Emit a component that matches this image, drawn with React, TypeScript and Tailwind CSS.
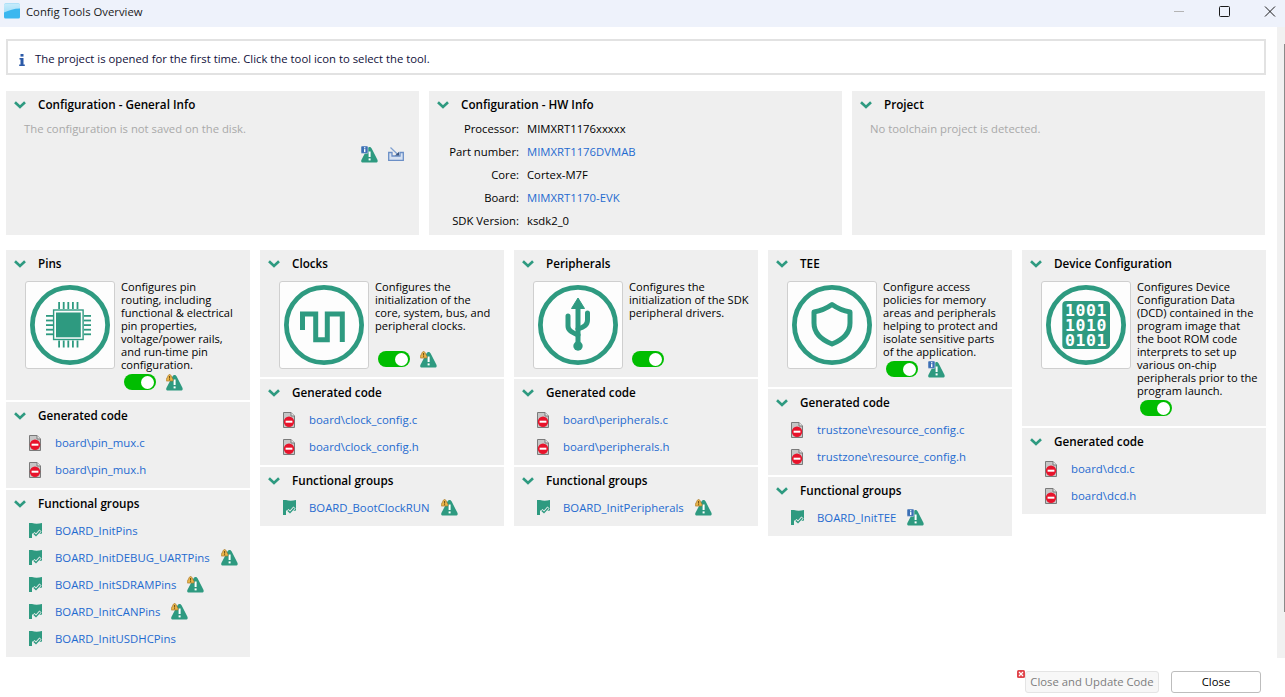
import React from "react";

const TEAL = "#2e9a80";

function Chevron() {
  return (
    <svg width="12" height="8" viewBox="0 0 12 8" className="shrink-0">
      <path d="M1 1.2 L6 6 L11 1.2" fill="none" stroke={TEAL} strokeWidth="2.6" />
    </svg>
  );
}

function Warn({ kind }: { kind?: "info" | "warn" }) {
  return (
    <svg width="17" height="17" viewBox="0 0 17 17" className="shrink-0">
      <path d="M8.6 1 C9.6 1 10.2 1.6 10.7 2.6 L16.3 13.6 C17.2 15.4 16.4 16.6 14.8 16.6 H2 C0.4 16.6 -0.3 15.4 0.5 13.7 L6.4 2.6 C6.9 1.6 7.6 1 8.6 1 Z" fill={TEAL} />
      <rect x="7.6" y="5.5" width="2" height="5.5" fill="#fff" />
      <rect x="7.6" y="12.4" width="2" height="2" fill="#fff" />
      {kind === "info" && (
        <g>
          <rect x="0" y="0" width="7" height="7.4" rx="1" fill="#3b6fb5" stroke="#efefef" strokeWidth="0.5" />
          <rect x="3" y="1.2" width="1.4" height="1.2" fill="#fff" />
          <rect x="3" y="3.1" width="1.4" height="3" fill="#fff" />
        </g>
      )}
      {kind === "warn" && (
        <g>
          <path d="M3.6 0.4 C4.2 0.4 4.5 0.8 4.8 1.3 L7 5.5 C7.4 6.4 7 7 6.2 7 H1 C0.2 7 -0.2 6.4 0.2 5.5 L2.4 1.3 C2.7 0.8 3 0.4 3.6 0.4 Z" fill="#e9b54a" stroke="#a8762a" strokeWidth="0.7" />
          <rect x="3.1" y="2" width="1" height="2.6" fill="#6b4a12" />
          <rect x="3.1" y="5.2" width="1" height="1" fill="#6b4a12" />
        </g>
      )}
    </svg>
  );
}

function ExportIcon() {
  return (
    <svg width="16" height="14" viewBox="0 0 16 14" className="shrink-0">
      <path d="M0.7 5.5 H4 V9 H12 V5.5 H15.3 V13.3 H0.7 Z" fill="#d7e2f2" stroke="#6b8fc6" strokeWidth="1.3" />
      <path d="M2.5 0.5 L9.5 7.2" stroke="#7fa0d0" strokeWidth="1.2" />
      <path d="M7 8.5 H11 V4.8 Z" fill="#3b5680" />
    </svg>
  );
}

function DocIcon() {
  return (
    <svg width="12" height="16" viewBox="0 0 12 16" className="shrink-0">
      <path d="M0.5 0.5 H8 L11.5 4 V15.5 H0.5 Z" fill="#c6c6c6" stroke="#7a7a7a" />
      <path d="M8 0.5 V4 H11.5" fill="#e8e8e8" stroke="#7a7a7a" />
      <circle cx="6" cy="9.7" r="5.2" fill="#e8132b" />
      <rect x="2.6" y="8.7" width="6.8" height="2" fill="#fff" />
    </svg>
  );
}

function FlagIcon() {
  return (
    <svg width="13" height="15" viewBox="0 0 13 15" className="shrink-0">
      <rect x="0" y="0" width="3" height="15" fill={TEAL} />
      <path d="M3 0 C6 1 9 1 13 0 V10.5 C9 11.3 6 11.3 3 10.5 Z" fill={TEAL} />
      <path d="M4.5 10 L7 12.6 L11.5 7.6" fill="none" stroke="#efefef" strokeWidth="3" />
      <path d="M4.8 10.4 L7 12.6 L11.2 8" fill="none" stroke={TEAL} strokeWidth="1.4" />
    </svg>
  );
}

function Toggle() {
  return (
    <div className="w-8 h-4 rounded-full bg-[#00bd00] flex items-center justify-end pr-[2px] shrink-0">
      <div className="w-[13px] h-[13px] rounded-full bg-white" />
    </div>
  );
}

function ToolGlyph({ kind }: { kind: string }) {
  return (
    <svg width="80" height="80" viewBox="0 0 80 80">
      <circle cx="40" cy="40" r="37.6" fill="none" stroke={TEAL} strokeWidth="4.8" />
      {kind === "pins" && (
        <g>
          <rect x="23.6" y="25" width="29.5" height="29.5" fill="none" stroke={TEAL} strokeWidth="1.4" />
          <rect x="26" y="27.5" width="24.8" height="24.8" fill={TEAL} />
          {[0, 1, 2, 3, 4].map((i) => (
            <g key={i} fill={TEAL}>
              <rect x={28.2 + i * 4.6} y="17" width="1.8" height="7" />
              <rect x={28.2 + i * 4.6} y="55.5" width="1.8" height="7" />
              <rect x="16" y={30 + i * 4.6} width="7" height="1.8" />
              <rect x="54" y={30 + i * 4.6} width="7" height="1.8" />
            </g>
          ))}
        </g>
      )}
      {kind === "clocks" && (
        <path d="M18.5 45 V29 H31.7 V54.7 H43.3 V29 H58.3 V57" fill="none" stroke={TEAL} strokeWidth="5" />
      )}
      {kind === "usb" && (
        <g>
          <path d="M40 13 L46.5 23.5 H33.5 Z" fill={TEAL} stroke={TEAL} strokeLinejoin="round" />
          <path d="M40 22 V60" stroke={TEAL} strokeWidth="5" />
          <circle cx="40" cy="61" r="4.7" fill={TEAL} />
          <path d="M30 31 V41 C30 45 33 47 40 50" fill="none" stroke={TEAL} strokeWidth="5" strokeLinecap="round" />
          <path d="M49.5 28 V35 C49.5 40 46 42 40 44" fill="none" stroke={TEAL} strokeWidth="5" strokeLinecap="round" />
        </g>
      )}
      {kind === "shield" && (
        <path d="M40 19.5 C35 23 28 26 22 27 V38 C22 48 30 55 40 59 C50 55 58 48 58 38 V27 C52 26 45 23 40 19.5 Z" fill="none" stroke={TEAL} strokeWidth="5" strokeLinejoin="round" />
      )}
      {kind === "binary" && (
        <g>
          <rect x="16.3" y="16" width="47.7" height="48" rx="4" fill={TEAL} />
          <g fill="#fff" fontFamily="'DejaVu Sans Mono', monospace" fontWeight="700" fontSize="16.5" letterSpacing="0.6" textAnchor="middle">
            <text x="40" y="31">1001</text>
            <text x="40" y="46">1010</text>
            <text x="40" y="61">0101</text>
          </g>
        </g>
      )}
    </svg>
  );
}

function Header({ title }: { title: string }) {
  return (
    <div className="h-[27px] flex items-center pl-[8px]">
      <Chevron />
      <span className="ml-[12px] text-[11.7px] font-semibold text-black">{title}</span>
    </div>
  );
}

function LinkRow({ icon, text, warn, small }: { icon: React.ReactNode; text: string; warn?: "info" | "warn"; small?: boolean }) {
  return (
    <div className="h-[27px] flex items-center pl-[22px]">
      <div className="w-[14px] flex justify-center">{icon}</div>
      <span className={small ? "ml-[13px] text-[11.35px] text-[#1f6bd0]" : "ml-[13px] text-[11.4px] text-[#1f6bd0]"}>{text}</span>
      {warn && (
        <span className="ml-[11px]">
          <Warn kind={warn} />
        </span>
      )}
    </div>
  );
}

function ListPanel({ title, children }: { title: string; children: React.ReactNode }) {
  return (
    <section className="bg-[#efefef] pb-[5px]">
      <Header title={title} />
      {children}
    </section>
  );
}

type Tool = {
  title: string;
  glyph: string;
  lines: string[];
  warn?: "info" | "warn";
  files: string[];
  groups: { name: string; warn?: "info" | "warn" }[];
};

const tools: Tool[] = [
  {
    title: "Pins",
    glyph: "pins",
    lines: ["Configures pin", "routing, including", "functional & electrical", "pin properties,", "voltage/power rails,", "and run-time pin", "configuration."],
    warn: "warn",
    files: ["board\\pin_mux.c", "board\\pin_mux.h"],
    groups: [
      { name: "BOARD_InitPins" },
      { name: "BOARD_InitDEBUG_UARTPins", warn: "warn" },
      { name: "BOARD_InitSDRAMPins", warn: "warn" },
      { name: "BOARD_InitCANPins", warn: "warn" },
      { name: "BOARD_InitUSDHCPins" },
    ],
  },
  {
    title: "Clocks",
    glyph: "clocks",
    lines: ["Configures the", "initialization of the", "core, system, bus, and", "peripheral clocks."],
    warn: "warn",
    files: ["board\\clock_config.c", "board\\clock_config.h"],
    groups: [{ name: "BOARD_BootClockRUN", warn: "warn" }],
  },
  {
    title: "Peripherals",
    glyph: "usb",
    lines: ["Configures the", "initialization of the SDK", "peripheral drivers."],
    files: ["board\\peripherals.c", "board\\peripherals.h"],
    groups: [{ name: "BOARD_InitPeripherals", warn: "warn" }],
  },
  {
    title: "TEE",
    glyph: "shield",
    lines: ["Configure access", "policies for memory", "areas and peripherals", "helping to protect and", "isolate sensitive parts", "of the application."],
    warn: "info",
    files: ["trustzone\\resource_config.c", "trustzone\\resource_config.h"],
    groups: [{ name: "BOARD_InitTEE", warn: "info" }],
  },
  {
    title: "Device Configuration",
    glyph: "binary",
    lines: ["Configures Device", "Configuration Data", "(DCD) contained in the", "program image that", "the boot ROM code", "interprets to set up", "various on-chip", "peripherals prior to the", "program launch."],
    files: ["board\\dcd.c", "board\\dcd.h"],
    groups: [],
  },
];

function ToolColumn({ tool }: { tool: Tool }) {
  return (
    <div className="w-[244px] flex flex-col gap-[2px]">
      <section className="bg-[#efefef]">
        <Header title={tool.title} />
        <div className="flex pl-[19px] pt-[4px] pb-[8px]">
          <div className="w-[90px] h-[88px] shrink-0 bg-[#fdfdfd] border border-[#cfcfcf] rounded-[3px] flex items-center justify-center">
            <ToolGlyph kind={tool.glyph} />
          </div>
          <div className="ml-[6px] pb-[2px]">
            <div className="-mt-[1px] min-h-[68px] text-[11.1px] leading-[13px] text-black whitespace-nowrap">
              {tool.lines.map((l) => (
                <div key={l}>{l}</div>
              ))}
            </div>
            <div className="mt-[3px] ml-[3px] h-4 flex items-center gap-[10px]">
              <Toggle />
              {tool.warn && <Warn kind={tool.warn} />}
            </div>
          </div>
        </div>
      </section>
      <ListPanel title="Generated code">
        {tool.files.map((f) => (
          <LinkRow key={f} icon={<DocIcon />} text={f} />
        ))}
      </ListPanel>
      {tool.groups.length > 0 && (
        <ListPanel title="Functional groups">
          {tool.groups.map((g) => (
            <LinkRow key={g.name} small icon={<FlagIcon />} text={g.name} warn={g.warn} />
          ))}
        </ListPanel>
      )}
    </div>
  );
}

const hwInfo: [string, string, boolean][] = [
  ["Processor:", "MIMXRT1176xxxxx", false],
  ["Part number:", "MIMXRT1176DVMAB", true],
  ["Core:", "Cortex-M7F", false],
  ["Board:", "MIMXRT1170-EVK", true],
  ["SDK Version:", "ksdk2_0", false],
];

export default function App() {
  return (
    <div className="w-[1285px] h-[697px] overflow-hidden bg-white flex flex-col text-[11.3px] text-black font-['Open_Sans','Noto_Sans',sans-serif]">
      <header className="h-[27px] shrink-0 bg-[#eef2fb] flex items-center pl-[4px] pb-[3px]">
        <svg width="16" height="16" viewBox="0 0 16 16" className="mb-[2px]">
          <defs>
            <linearGradient id="folderTop" x1="0" y1="0" x2="0" y2="1">
              <stop offset="0" stopColor="#c8ecfb" />
              <stop offset="1" stopColor="#a4dff8" />
            </linearGradient>
          </defs>
          <rect x="0" y="0.5" width="16" height="15" rx="1.5" fill="#3bb7ef" />
          <path d="M0 2 C0 1 0.6 0.5 1.5 0.5 H14.5 C15.4 0.5 16 1 16 2 V5.5 C10 5.5 5 7.5 0 9.5 Z" fill="url(#folderTop)" />
        </svg>
        <span className="ml-[6px] text-[#1a1a1a]">Config Tools Overview</span>
        <div className="ml-auto flex items-center">
          <svg width="12" height="12" viewBox="0 0 12 12" className="mr-[34px]">
            <path d="M2 5.5 H12" stroke="#b4b4b4" />
          </svg>
          <svg width="12" height="12" viewBox="0 0 12 12" className="mr-[34px]">
            <rect x="1.5" y="0.5" width="10" height="10" rx="1" fill="none" stroke="#1a1a1a" />
          </svg>
          <svg width="12" height="12" viewBox="0 0 12 12" className="mr-[9px]">
            <path d="M1 0.5 L11 10.5 M11 0.5 L1 10.5" stroke="#1a1a1a" />
          </svg>
        </div>
      </header>

      <div className="flex-1 min-h-0 flex items-start">
        <main className="flex-1 min-w-0 pl-[6px] pr-[11px] pt-[12px]">
          <div className="h-[36px] border-2 border-[#e2e2e2] flex items-center pl-[11px] pt-[5px]">
            <svg width="6" height="12" viewBox="0 0 6 12">
              <rect x="1.5" y="0" width="3" height="2.6" fill="#2c5aa8" />
              <path d="M0.5 4 H4.5 V10.6 H5.8 V12 H0.2 V10.6 H1.5 V5.4 H0.5 Z" fill="#2c5aa8" />
            </svg>
            <span className="ml-[10px] text-[#10103a]">The project is opened for the first time. Click the tool icon to select the tool.</span>
          </div>

          <div className="mt-[16px] flex gap-[10px]">
            <section className="w-[413px] h-[144px] bg-[#efefef] flex flex-col">
              <Header title="Configuration - General Info" />
              <div className="pl-[18px] pt-[3px] text-[#a9a9a9]">The configuration is not saved on the disk.</div>
              <div className="mt-[8px] flex justify-end items-center gap-[10px] pr-[15px]">
                <Warn kind="info" />
                <ExportIcon />
              </div>
            </section>
            <section className="w-[413px] h-[144px] bg-[#efefef]">
              <Header title="Configuration - HW Info" />
              {hwInfo.map(([k, v, link]) => (
                <div key={k} className="h-[23px] flex items-center">
                  <span className="w-[90px] text-right">{k}</span>
                  <span className={link ? "ml-[8px] text-[#1f6bd0]" : "ml-[8px]"}>{v}</span>
                </div>
              ))}
            </section>
            <section className="w-[413px] h-[144px] bg-[#efefef]">
              <Header title="Project" />
              <div className="pl-[18px] pt-[3px] text-[#a9a9a9]">No toolchain project is detected.</div>
            </section>
          </div>

          <div className="mt-[15px] flex gap-[10px] items-start">
            {tools.map((t) => (
              <ToolColumn key={t.title} tool={t} />
            ))}
          </div>

          <div className="mt-[14px] flex justify-end items-start pr-[5px]">
            <div className="relative">
              <svg width="8" height="8" viewBox="0 0 8 8" className="absolute left-[-8px] top-[-1px]">
                <rect width="8" height="8" rx="1.5" fill="#e0454c" />
                <path d="M2 2 L6 6 M6 2 L2 6" stroke="#fff" strokeWidth="1.2" />
              </svg>
              <div className="w-[134px] h-[22px] rounded-[3px] border border-[#e4e4e4] bg-[#f7f7f7] flex items-center justify-center text-[#7d7d7d]">Close and Update Code</div>
            </div>
            <div className="ml-[12px] w-[90px] h-[22px] rounded-[3px] border border-[#bdbdbd] bg-white flex items-center justify-center">Close</div>
          </div>
        </main>
        <aside className="w-[8px] h-[631px] shrink-0 bg-[#f1f1f1] flex justify-end">
          <div className="w-px h-[568px] mt-[17px] bg-[#8a8a8a]" />
        </aside>
      </div>
    </div>
  );
}
